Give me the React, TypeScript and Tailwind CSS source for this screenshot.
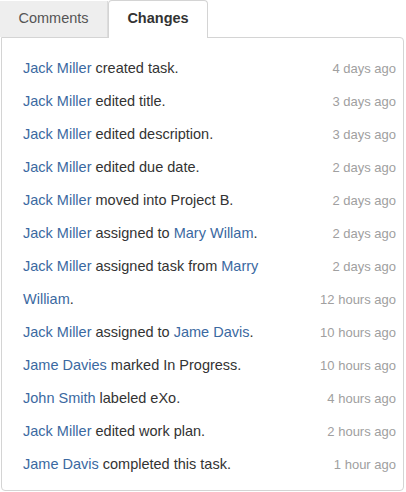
const rows: { who: string; action: string; target?: string; tail?: string; when: string }[] = [
  { who: "Jack Miller", action: " created task.", when: "4 days ago" },
  { who: "Jack Miller", action: " edited title.", when: "3 days ago" },
  { who: "Jack Miller", action: " edited description.", when: "3 days ago" },
  { who: "Jack Miller", action: " edited due date.", when: "2 days ago" },
  { who: "Jack Miller", action: " moved into Project B.", when: "2 days ago" },
  { who: "Jack Miller", action: " assigned to ", target: "Mary Willam", tail: ".", when: "2 days ago" },
  { who: "Jack Miller", action: " assigned task from ", target: "Marry", when: "2 days ago" },
  { who: "", action: "", target: "William", tail: ".", when: "12 hours ago" },
  { who: "Jack Miller", action: " assigned to ", target: "Jame Davis", tail: ".", when: "10 hours ago" },
  { who: "Jame Davies", action: " marked In Progress.", when: "10 hours ago" },
  { who: "John Smith", action: " labeled eXo.", when: "4 hours ago" },
  { who: "Jack Miller", action: " edited work plan.", when: "2 hours ago" },
  { who: "Jame Davis", action: " completed this task.", when: "1 hour ago" },
];

export default function App() {
  return (
    <div className="h-[492px] w-[406px] bg-white font-['Liberation_Sans',Arial,sans-serif]">
      <div className="relative z-10 flex h-[37px] items-end text-[14.5px]">
        <div className="flex h-[36px] w-[108px] items-center justify-center border-r border-[#dcdcdc] bg-[#eeeeee] text-[#555]">
          Comments
        </div>
        <div className="-mb-px flex h-[38px] w-[100px] items-center justify-center rounded-t-[4px] border border-b-0 border-[#d4d4d4] bg-white pb-px font-bold text-[#333]">
          Changes
        </div>
      </div>
      <div className="ml-px h-[454px] w-[403px] rounded-b-[4px] rounded-tr-[4px] border border-[#d4d4d4] pt-[14px] pl-[21px] pr-[7px]">
        {rows.map((r, i) => (
          <div key={i} className="flex h-[33px] items-center justify-between">
            <span className="text-[14.5px] text-[#333]">
              {r.who && <a className="text-[#3b69a1]">{r.who}</a>}
              {r.action}
              {r.target && <a className="text-[#3b69a1]">{r.target}</a>}
              {r.tail}
            </span>
            <span className="text-[13px] text-[#a0a0a0]">{r.when}</span>
          </div>
        ))}
      </div>
    </div>
  );
}
